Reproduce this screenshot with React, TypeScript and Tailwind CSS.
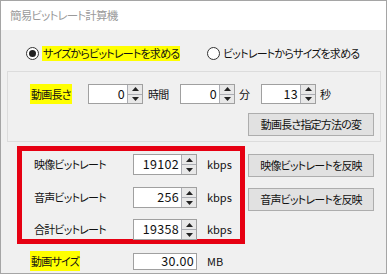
import React from 'react';

const jp = "font-['Noto_Sans_CJK_JP','Noto_Sans_CJK_SC',sans-serif] [font-feature-settings:'palt'] text-[11px] tracking-[-0.8px] leading-none text-[#111]";

const Arrows = () => (
  <div className="w-[15px] h-full flex flex-col border-l border-[#abadb3] bg-[#e8e8e8]">
    <div className="flex-1 flex items-center justify-center border-b border-[#abadb3]">
      <svg width="7" height="4" viewBox="0 0 7 4"><polygon points="0,4 7,4 3.5,0" fill="#222" /></svg>
    </div>
    <div className="flex-1 flex items-center justify-center">
      <svg width="7" height="4" viewBox="0 0 7 4"><polygon points="0,0 7,0 3.5,4" fill="#222" /></svg>
    </div>
  </div>
);

interface SpinProps {
  value: string;
  w: string;
  h: string;
  arrows?: boolean;
}

const Spin: React.FC<SpinProps> = ({ value, w, h, arrows = true }) => (
  <div className={`${w} ${h} flex border border-[#a0a0a0] bg-white`}>
    <div className="flex-1 flex items-center justify-end pr-[2px] text-[12.5px] tracking-[0.3px]">{value}</div>
    {arrows && <Arrows />}
  </div>
);

const Btn: React.FC<{ label: string; cls: string }> = ({ label, cls }) => (
  <div className={`${cls} w-[126px] h-[23px] flex items-center justify-center border border-[#adadad] bg-[#e1e1e1]`}>
    {label}
  </div>
);

export default function App() {
  return (
    <div className={`w-[388px] h-[277px] bg-white ${jp}`}>
      <div className="w-[387px] h-[274px] border border-[#a5a5a5] flex flex-col">
        {/* title */}
        <div className="h-[29px] bg-white flex items-center pl-[9px] text-[#9a9a9a] text-[11.5px]">簡易ビットレート計算機</div>

        <div className="flex-1 bg-[#f0f0f0] flex flex-col">
          {/* radios */}
          <div className="mt-[15px] h-[16px] flex items-center pl-[25px]">
            <div className="w-[181px] flex items-center">
              <div className="w-[13px] h-[13px] rounded-full border border-[#333] bg-white flex items-center justify-center">
                <div className="w-[7px] h-[7px] rounded-full bg-[#222]" />
              </div>
              <span className="ml-[3px] px-[1px] py-[2px] bg-[#ffff00]">サイズからビットレートを求める</span>
            </div>
            <div className="w-[13px] h-[13px] rounded-full border border-[#333] bg-white" />
            <span className="ml-[3px]">ビットレートからサイズを求める</span>
          </div>

          {/* length group */}
          <div className="mt-[10px] ml-[6px] w-[374px] h-[71px] border border-[#dcdcdc] flex flex-col">
            <div className="mt-[12px] h-[20px] flex items-center pl-[22px]">
              <div className="w-[58px]">
                <span className="bg-[#ffff00] px-[1px] py-[2px]">動画長さ</span>
              </div>
              <Spin value="0" w="w-[55px]" h="h-[20px]" />
              <span className="ml-[5px] w-[32px]">時間</span>
              <Spin value="0" w="w-[55px]" h="h-[20px]" />
              <span className="ml-[4px] w-[22px]">分</span>
              <Spin value="13" w="w-[55px]" h="h-[20px]" />
              <span className="ml-[4px]">秒</span>
            </div>
            <Btn label="動画長さ指定方法の変" cls="mt-[9px] ml-[240px]" />
          </div>

          {/* bitrate section */}
          <div className="mt-[4px] flex">
            <div className="ml-[16px] w-[228px] h-[98px] border-[5px] border-[#e60012] flex flex-col pt-[3px] pl-[12px]">
              <div className="h-[21px] flex items-center">
                <span className="w-[99px]">映像ビットレート</span>
                <Spin value="19102" w="w-[64px]" h="h-[21px]" />
                <span className="ml-[10px] tracking-normal">kbps</span>
              </div>
              <div className="mt-[12px] h-[21px] flex items-center">
                <span className="w-[99px]">音声ビットレート</span>
                <Spin value="256" w="w-[64px]" h="h-[21px]" />
                <span className="ml-[10px] tracking-normal">kbps</span>
              </div>
              <div className="mt-[11px] h-[21px] flex items-center">
                <span className="w-[99px]">合計ビットレート</span>
                <Spin value="19358" w="w-[64px]" h="h-[21px]" />
                <span className="ml-[10px] tracking-normal">kbps</span>
              </div>
            </div>
            <div className="ml-[3px] flex flex-col">
              <Btn label="映像ビットレートを反映" cls="mt-[8px]" />
              <Btn label="音声ビットレートを反映" cls="mt-[11px]" />
            </div>
          </div>

          {/* size */}
          <div className="mt-[9px] h-[17px] flex items-center pl-[29px]">
            <div className="w-[103px]">
              <span className="bg-[#ffff00] px-[1px] py-[2px]">動画サイズ</span>
            </div>
            <Spin value="30.00" w="w-[64px]" h="h-[17px]" arrows={false} />
            <span className="ml-[10px] tracking-normal">MB</span>
          </div>
        </div>
      </div>
    </div>
  );
}
